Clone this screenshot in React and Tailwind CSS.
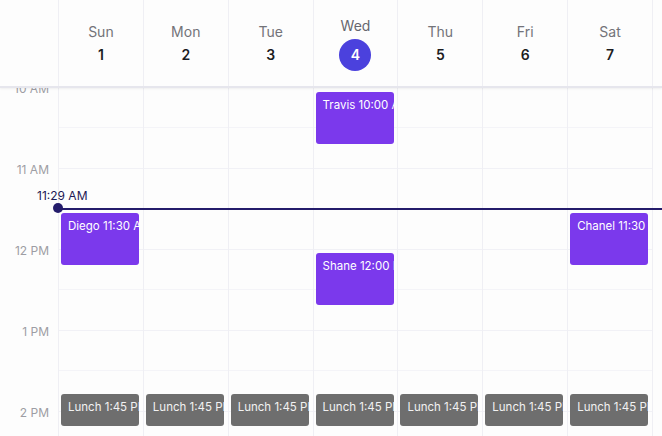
const days = [
  ["Sun", 1],
  ["Mon", 2],
  ["Tue", 3],
  ["Wed", 4],
  ["Thu", 5],
  ["Fri", 6],
  ["Sat", 7],
]

const hours = ["10 AM", "11 AM", "12 PM", "1 PM", "2 PM"]

// top offsets are px from the 10 AM line (81px per hour)
const events = {
  0: [{ title: "Diego 11:30 AM", top: 126, h: 52 }],
  3: [
    { title: "Travis 10:00 AM", top: 5, h: 52 },
    { title: "Shane 12:00 PM", top: 166, h: 52 },
  ],
  6: [{ title: "Chanel 11:30 AM", top: 126, h: 52 }],
}

const lunch = { title: "Lunch 1:45 PM", top: 307, h: 32, lunch: true }

function Event({ ev }) {
  return (
    <div
      className={`absolute left-[2px] w-[78px] overflow-hidden whitespace-nowrap rounded-[3px] pl-[7px] pt-[5px] text-[11.5px] leading-4 ${
        ev.lunch ? "bg-[#6e6e6e] text-[#f2f2f2]" : "bg-[#7b39ec] text-white"
      }`}
      style={{ top: ev.top, height: ev.h }}
    >
      {ev.title}
    </div>
  )
}

export default function App() {
  return (
    <div className="relative h-[436px] w-[662px] overflow-hidden bg-[#fdfdfd] font-['Inter',sans-serif]">
      {/* header */}
      <div className="relative z-10 flex h-[88px] border-b-2 border-[#e6e6ed] bg-[#fdfdfd] shadow-[0_1px_2px_rgba(0,0,0,0.06)]">
        <div className="w-[58px]" />
        <div className="grid w-[595px] grid-cols-7 border-r border-[#efeff4]">
          {days.map(([name, num]) => (
            <div key={name} className="flex flex-col items-center justify-center border-l border-[#efeff4]">
              {num === 4 ? (
                <>
                  <span className="text-[14px] leading-5 text-[#66666e]">{name}</span>
                  <span className="mt-[3px] flex h-8 w-8 items-center justify-center rounded-full bg-[#4b41dd] text-[14px] font-semibold text-white">
                    {num}
                  </span>
                </>
              ) : (
                <>
                  <span className="text-[14px] leading-5 text-[#737379]">{name}</span>
                  <span className="mt-[3px] text-[14px] font-semibold leading-5 text-[#1c1c1f]">{num}</span>
                </>
              )}
            </div>
          ))}
        </div>
      </div>

      {/* body */}
      <div className="relative -mt-px flex">
        <div className="w-[58px] shrink-0">
          {hours.map(h => (
            <div key={h} className="h-[81px]">
              <span className="block -translate-y-[6px] pr-[9px] text-right text-[12px] leading-4 text-[#9d9da4]">{h}</span>
            </div>
          ))}
        </div>
        <div className="grid w-[595px] grid-cols-7 border-r border-[#efeff4]">
          {days.map(([name], i) => (
            <div key={name} className="relative border-l border-[#efeff4]">
              {hours.map(h => (
                <div key={h} className="h-[81px] border-t border-[#f1f1f6]">
                  <div className="h-[40px] border-b border-[#f4f4f8]" />
                </div>
              ))}
              {(events[i] || []).map(ev => (
                <Event key={ev.title} ev={ev} />
              ))}
              <Event ev={lunch} />
            </div>
          ))}
        </div>

        {/* current time */}
        <span className="absolute left-[37px] top-[101px] text-[12px] leading-4 text-[#1f1a55]">11:29 AM</span>
        <div className="absolute left-[58px] right-0 top-[121px] h-[2px] bg-[#241c6b]" />
        <div className="absolute left-[53px] top-[116px] h-[10px] w-[10px] rounded-full bg-[#241c6b]" />
      </div>
    </div>
  )
}
